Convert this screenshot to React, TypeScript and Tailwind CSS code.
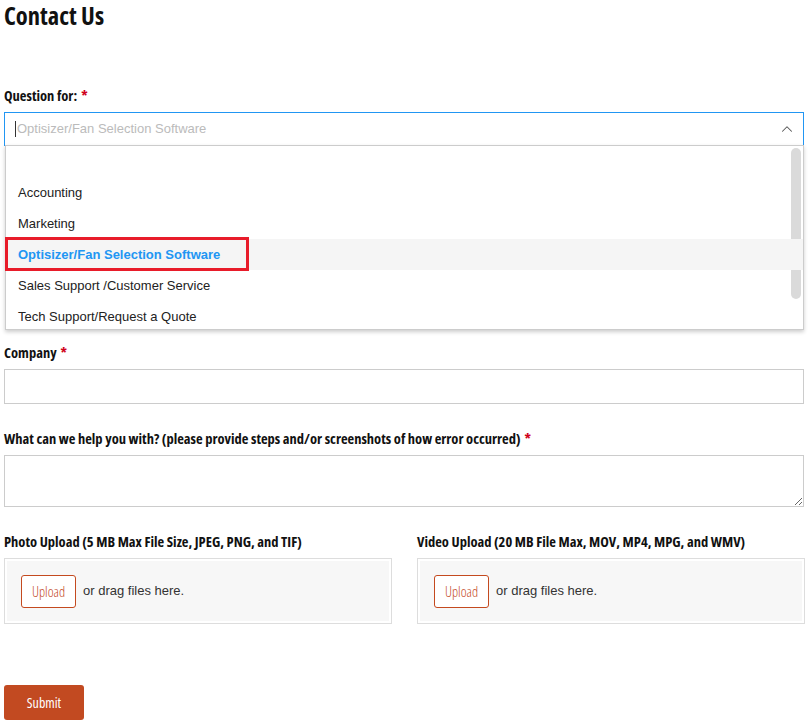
import { ChevronUp } from 'lucide-react';

const OPTIONS = [
  'Accounting',
  'Marketing',
  'Optisizer/Fan Selection Software',
  'Sales Support /Customer Service',
  'Tech Support/Request a Quote',
];

const cond = "font-['Open_Sans',sans-serif] font-stretch-condensed";
const arial = "font-['Liberation_Sans',Arial,sans-serif]";

function Label({ text, required }: { text: string; required?: boolean }) {
  return (
    <div className={`${cond} text-[14.5px] leading-[18px] font-bold text-[#111]`}>
      {text}
      {required && <span className="ml-1 text-[#d0021b]">*</span>}
    </div>
  );
}

function UploadBox({ label }: { label: string }) {
  return (
    <div className="flex flex-1 flex-col">
      <Label text={label} />
      <div className="mt-[7px] border border-[#ddd] p-[2px]">
        <div className="flex h-[60px] items-center bg-[#f7f7f7] px-[14px]">
          <button
            type="button"
            className={`${cond} h-[33px] w-[55px] rounded-[3px] border border-[#c44a1f] bg-white text-[14px] font-light text-[#c44a1f]`}
          >
            Upload
          </button>
          <span className={`${arial} ml-[7px] text-[13px] text-[#333]`}>or drag files here.</span>
        </div>
      </div>
    </div>
  );
}

export default function App() {
  return (
    <div className="min-h-[724px] w-[808px] bg-white px-[4px]">
      <h1 className={`${cond} pt-[1px] text-[24.5px] leading-[30px] font-bold text-[#111]`}>Contact Us</h1>

      <div className="mt-[56px]">
        <Label text="Question for:" required />
        <div className="relative mt-[7px] w-[800px]">
          <div className="flex h-[34px] items-center border border-[#2196f3] pr-[7px] pl-[10px]">
            <span className="mr-[1px] h-[16px] w-px bg-[#333]" />
            <span className={`${arial} flex-1 text-[13px] text-[#bbb]`}>Optisizer/Fan Selection Software</span>
            <ChevronUp className="h-[18px] w-[18px] text-[#555]" strokeWidth={1.4} />
          </div>
          {/* open dropdown list */}
          <div className="absolute top-[33px] left-[1px] z-10 h-[185px] w-[799px] border border-[#ccc] bg-white shadow-[0_2px_4px_rgba(0,0,0,0.2)]">
            <div className="absolute top-[2px] right-[2px] h-[151px] w-[10px] rounded-full bg-[#dadada]" />
            <div className="pt-[31px]">
              {OPTIONS.map((o) => {
                const active = o.startsWith('Optisizer');
                return (
                  <div
                    key={o}
                    className={`${arial} relative flex h-[31px] items-center px-[12px] text-[13px] ${
                      active ? 'bg-[#f5f5f5] font-bold text-[#2196f3]' : 'text-[#222]'
                    }`}
                  >
                    {active && (
                      <span className="absolute top-[-2px] left-[-1px] h-[34px] w-[244px] border-[3px] border-[#e81c2a]" />
                    )}
                    <span className="relative">{o}</span>
                  </div>
                );
              })}
            </div>
          </div>
        </div>
      </div>

      <div className="mt-[198px]">
        <Label text="Company" required />
        <div className="mt-[7px] h-[35px] w-[800px] border border-[#ccc]" />
      </div>

      <div className="mt-[26px]">
        <Label
          text="What can we help you with? (please provide steps and/or screenshots of how error occurred)"
          required
        />
        <textarea className="mt-[7px] block h-[52px] w-[800px] border border-[#ccc]" />
      </div>

      <div className="mt-[26px] flex w-[801px] gap-[25px]">
        <UploadBox label="Photo Upload (5 MB Max File Size, JPEG, PNG, and TIF)" />
        <UploadBox label="Video Upload (20 MB File Max, MOV, MP4, MPG, and WMV)" />
      </div>

      <button
        type="button"
        className={`${cond} mt-[61px] h-[35px] w-[80px] rounded-[3px] bg-[#c24a21] text-[14px] text-white`}
      >
        Submit
      </button>
    </div>
  );
}
